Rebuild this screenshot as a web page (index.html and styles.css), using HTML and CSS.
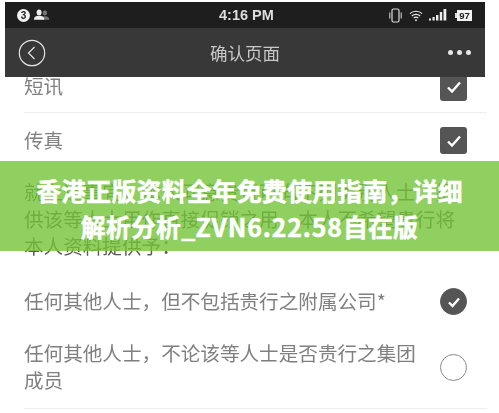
FILE: index.html
```html
<!DOCTYPE html>
<html lang="zh-CN">
<head>
<meta charset="utf-8">
<title>确认页面</title>
<link rel="stylesheet" href="styles.css">
</head>
<body>
<div class="page">
  <header class="header">
    <div class="status">
      <div class="status-left">
        <span class="badge">3</span>
        <svg class="people" width="16" height="12" viewBox="0 0 22 14" preserveAspectRatio="none"><circle cx="15" cy="4.500" r="3" fill="#777"/><path d="M10 12.500c0-3 2-4 5-4s6 1 6 4z" fill="#777"/><circle cx="7" cy="4" r="3.400" fill="#eee"/><path d="M0 12.500c0-3.400 3-4.500 7-4.500s7 1.100 7 4.500z" fill="#eee"/></svg>
      </div>
      <span class="time">4:16 PM</span>
      <div class="status-right">
        <svg class="ic-vib" width="13" height="15" viewBox="0 0 13 15" fill="none" stroke="#ddd"><rect x="3" y="1" width="7" height="13" rx="1.500" stroke-width="1.200"/><path d="M0.800 4.500v6M12.200 4.500v6" stroke-width="1"/></svg>
        <svg class="ic-wifi" width="14" height="13" viewBox="0 0 15 13" fill="none" stroke="#eee" stroke-width="1.200"><path d="M1 4.500c3.500-3.400 9.500-3.400 13 0M3 7c2.500-2.200 6.500-2.200 9 0M5 9.300c1.500-1.200 3.500-1.200 5 0"/><circle cx="7.500" cy="11.500" r="1" fill="#eee" stroke="none"/></svg>
        <svg class="ic-signal" width="18" height="12" viewBox="0 0 18 12" fill="#eee"><rect x="0" y="9.500" width="2" height="2"/><rect x="3.500" y="8" width="2.200" height="3.500"/><rect x="7" y="6" width="2.400" height="5.500"/><rect x="10.800" y="3" width="2.400" height="8.500"/><rect x="14.500" y="0" width="2.800" height="11.500"/></svg>
        <span class="battery">97</span>
      </div>
    </div>
    <div class="nav">
      <svg width="28" height="28" viewBox="0 0 28 28" fill="none" stroke="#e4e4e4"><circle cx="14" cy="14" r="12.700" stroke-width="1.200"/><path d="M16.500 8l-6 6 6 6" stroke-width="1.200"/></svg>
      <h1 class="title">确认页面</h1>
      <div class="dots"><i></i><i></i><i></i></div>
    </div>
  </header>

  <main class="list">
    <div class="row row-short line">
      <span>短讯</span>
      <span class="checkbox"><svg width="16" height="14" viewBox="0 0 16 14" fill="none" stroke="#fff" stroke-width="2.400"><path d="M2 7.500l4 4 8-9"/></svg></span>
    </div>
    <div class="row row-short">
      <span>传真</span>
      <span class="checkbox"><svg width="16" height="14" viewBox="0 0 16 14" fill="none" stroke="#fff" stroke-width="2.400"><path d="M2 7.500l4 4 8-9"/></svg></span>
    </div>
    <p class="para">就上述事宜，本人同意贵行可向下列类别人士，提供该等人士用作直接促销之用，本人不希望贵行将本人资料提供予：</p>
    <div class="row row-tall">
      <span class="label">任何其他人士，但不包括贵行之附属公司*</span>
      <span class="radio on"><svg width="16" height="14" viewBox="0 0 16 14" fill="none" stroke="#fff" stroke-width="2.400"><path d="M3 7.500l3.500 3.500 6.500-7.500"/></svg></span>
    </div>
    <div class="row row-tall line">
      <span class="label">任何其他人士，不论该等人士是否贵行之集团成员</span>
      <span class="radio"></span>
    </div>
  </main>

  <div class="banner">
    <div class="banner-text">香港正版资料全年免费使用指南，详细<br>解析分析_<span class="latin">ZVN6.22.58</span>自在版</div>
  </div>
</div>
</body>
</html>
```
FILE: styles.css
```css
* { box-sizing: border-box; }
html, body { margin: 0; padding: 0; background: #fff; }
.page {
  position: relative;
  width: 499px;
  height: 413px;
  overflow: hidden;
  font-family: "Noto Sans CJK SC", "Liberation Sans", sans-serif;
}
.header {
  position: relative;
  z-index: 1;
  margin: 2px 14px 0 5px;
  filter: blur(0.4px);
}
.status {
  height: 26px;
  background: #1e1e1e;
  display: flex;
  align-items: center;
  justify-content: space-between;
  position: relative;
  padding: 0 13px 0 12px;
}
.status-left, .status-right { display: flex; align-items: center; }
.status-left { gap: 4px; }
.ic-wifi { margin-left: 7px; }
.ic-signal { margin-left: 6px; }
.badge {
  width: 13px;
  height: 13px;
  border-radius: 50%;
  background: #f2f2f2;
  color: #222;
  font: bold 10px/13px "Liberation Sans", sans-serif;
  text-align: center;
}
.time {
  position: absolute;
  left: 214px;
  top: 3px;
  font: bold 14.500px/20px "Liberation Sans", sans-serif;
  color: #ddd;
}
.battery {
  position: relative;
  width: 15px;
  height: 11px;
  margin-left: 10px;
  background: #f2f2f2;
  color: #222;
  font: bold 9.500px/11px "Liberation Sans", sans-serif;
  text-align: center;
}
.battery::before {
  content: "";
  position: absolute;
  left: -2px;
  top: 3px;
  width: 1.500px;
  height: 5px;
  background: #ddd;
}
.nav {
  height: 49px;
  background: #383838;
  display: flex;
  align-items: center;
  justify-content: space-between;
  padding: 0 14px 0 13px;
  position: relative;
}
.title {
  position: absolute;
  left: 205px;
  top: 12px;
  margin: 0;
  font-size: 17.500px;
  line-height: 26px;
  font-weight: 400;
  color: #c8c8c8;
}
.dots { display: flex; gap: 4px; }
.dots i {
  width: 5px;
  height: 5px;
  border-radius: 50%;
  background: #e6e6e6;
}
.list {
  margin: -17px 12px 0 24px;
  color: #808080;
  font-size: 19.600px;
  line-height: 27.500px;
  filter: blur(0.45px);
}
.row {
  display: flex;
  align-items: center;
  justify-content: space-between;
  padding-right: 20px;
}
.row-short { height: 53px; }
.line { border-bottom: 1px solid #eee; }
.checkbox {
  width: 27px;
  height: 27px;
  border-radius: 3px;
  background: #555;
  display: flex;
  align-items: center;
  justify-content: center;
  margin-top: 2px;
}
.para {
  margin: 12px 0 14px;
  width: 434px;
  line-height: 27px;
  color: #5a5a5a;
}
.row-tall { padding-top: 13px; padding-bottom: 10.500px; }
.row-tall.line { padding-bottom: 14px; }
.label { width: 400px; }
.radio {
  width: 27px;
  height: 27px;
  border-radius: 50%;
  border: 1px solid #888;
  display: flex;
  align-items: center;
  justify-content: center;
  flex: none;
  margin-top: 2px;
}
.radio.on { background: #555; border-color: #555; }
.banner {
  position: absolute;
  left: 0;
  top: 161px;
  width: 499px;
  height: 90px;
  z-index: 2;
  background: rgba(116, 196, 56, 0.8);
  display: flex;
  align-items: center;
  justify-content: center;
}
.banner-text {
  color: #fff;
  font-size: 24.800px;
  font-weight: 700;
  letter-spacing: 0.3px;
  -webkit-text-stroke: 0.5px #fff;
  line-height: 36px;
  text-align: center;
  margin-top: 4px;
  white-space: nowrap;
}
.latin { letter-spacing: 0.9px; }
```
